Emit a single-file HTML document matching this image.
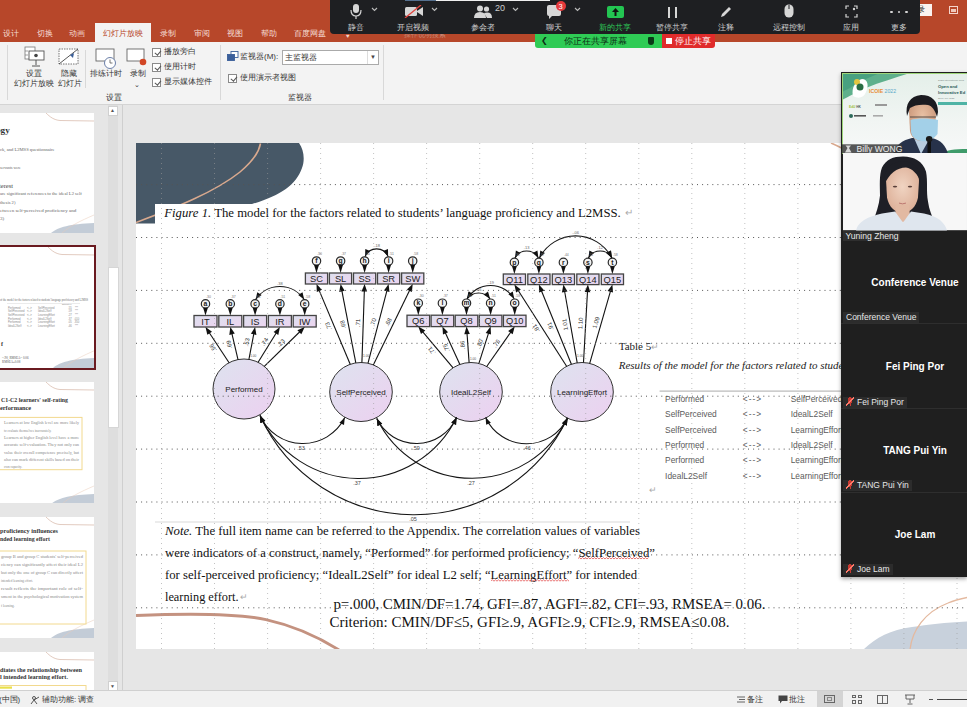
<!DOCTYPE html>
<html><head><meta charset="utf-8">
<style>
*{margin:0;padding:0;box-sizing:border-box}
html,body{width:967px;height:707px;overflow:hidden;background:#e6e6e6;font-family:"Liberation Sans",sans-serif}
.abs{position:absolute}
.t{position:absolute;white-space:nowrap;line-height:1}
#tabs{left:0;top:0;width:967px;height:42px;background:#b7472a}
.tab{position:absolute;top:28px;color:#f6ddd5;font-size:8px}
#ribbon{left:0;top:42px;width:967px;height:63px;background:#f3f3f3;border-bottom:1px solid #d4d4d4}
.rl{position:absolute;font-size:8px;color:#333;white-space:nowrap;line-height:1;margin-top:1px}
.sep{position:absolute;width:1px;background:#d8d8d8}
.cb{position:absolute;width:9px;height:9px;border:1px solid #8a8a8a;background:#fff;margin-top:1px}
.cb:after{content:"";position:absolute;left:2.5px;top:0px;width:2.5px;height:5px;border-right:1px solid #555;border-bottom:1px solid #555;transform:rotate(40deg)}
#pane{left:0;top:105px;width:121px;height:586px;background:#e6e6e6;overflow:hidden}
.thumb{position:absolute;left:0;width:94px;background:#fff;overflow:hidden}
#canvas{left:122px;top:105px;width:845px;height:586px;background:#e6e6e6;border-left:1px solid #cfcfcf}
#status{left:0;top:690px;width:967px;height:17px;background:#f1f1f1;border-top:1px solid #d0d0d0}
#zbar{left:330px;top:0;width:590px;height:34px;background:#1e1f22;border-radius:0 0 4px 4px}
.zl{position:absolute;top:22.5px;color:#d0d0d0;font-size:8.3px;white-space:nowrap;line-height:1;transform:translateX(-50%)}
#panel{left:841px;top:72px;width:126px;height:505px;background:#1f1f1f;box-shadow:0 2px 4px rgba(0,0,0,.35)}
.pname{position:absolute;color:#fff;font-weight:bold;font-size:10px;white-space:nowrap;line-height:1;transform:translateX(-50%)}
.plab{position:absolute;left:2px;height:11px;background:#2c2c2c;color:#e8e8e8;font-size:8.5px;line-height:11px;padding:0 3px 0 3px;white-space:nowrap}
.mic{display:inline-block;width:8px;height:9px;vertical-align:-1px;margin-right:3px;background:linear-gradient(135deg,transparent 42%,#ff7a6a 42%,#ff7a6a 55%,transparent 55%),radial-gradient(ellipse 2.2px 3.5px at 4px 3.5px,#c83a32 98%,transparent 100%),linear-gradient(#c83a32,#c83a32) 3.5px 7px/1px 2px no-repeat}
</style></head><body>

<!-- ribbon tabs -->
<div id="tabs" class="abs">
  <div class="tab" style="left:3px">设计</div>
  <div class="tab" style="left:37px">切换</div>
  <div class="tab" style="left:69px">动画</div>
  <div class="abs" style="left:95px;top:23px;width:56px;height:19px;background:#f3f3f3"></div>
  <div class="tab" style="left:103px;color:#b7472a">幻灯片放映</div>
  <div class="tab" style="left:160px">录制</div>
  <div class="tab" style="left:194px">审阅</div>
  <div class="tab" style="left:227px">视图</div>
  <div class="tab" style="left:261px">帮助</div>
  <div class="tab" style="left:294px">百度网盘</div>
  <div class="t" style="left:346px;top:33px;font-size:6px;color:#f3d6cc">♥</div><div class="t" style="left:404px;top:31px;font-size:7px;color:#c98a77">操作说明搜索</div>
  <div class="abs" style="left:920px;top:4px;width:12px;height:12px;background:#fbf3f0"></div><div class="t" style="left:917px;top:6px;font-size:8px;color:#333">录</div>
  <div class="abs" style="left:949px;top:6px;width:8.5px;height:7.5px;border:1px solid #f5d5cc"></div><div class="abs" style="left:951px;top:9px;width:4.5px;height:2.5px;background:#f0c8bb"></div>
</div>

<!-- ribbon body -->
<div id="ribbon" class="abs">
  <div class="sep" style="left:7px;top:3px;height:55px"></div>
  <!-- setup slideshow icon -->
  <svg class="abs" style="left:22px;top:4px" width="24" height="22" viewBox="0 0 24 22">
    <rect x="3" y="1" width="10" height="12" fill="#fff" stroke="#777" stroke-width="0.8"/>
    <rect x="7" y="5" width="15" height="9" fill="#fff" stroke="#555" stroke-width="0.9"/>
    <circle cx="14" cy="9.5" r="1.8" fill="#444"/>
    <line x1="14" y1="14" x2="14" y2="19" stroke="#555"/>
    <line x1="10" y1="20" x2="18" y2="20" stroke="#555"/>
    <line x1="3" y1="5" x2="6" y2="5" stroke="#777" stroke-width="0.7"/>
    <line x1="3" y1="9" x2="6" y2="9" stroke="#777" stroke-width="0.7"/>
  </svg>
  <div class="rl" style="left:26px;top:27px">设置</div>
  <div class="rl" style="left:14px;top:37px">幻灯片放映</div>
  <svg class="abs" style="left:58px;top:6px" width="22" height="18" viewBox="0 0 22 18">
    <rect x="1" y="1" width="19" height="15" fill="#fff" stroke="#666" stroke-width="0.9" stroke-dasharray="1.5 1"/>
    <line x1="1" y1="16" x2="20" y2="1" stroke="#444" stroke-width="0.9"/>
    <path d="M12 7 L16 5 L15 10 Z" fill="#3b5f9a"/>
  </svg>
  <div class="rl" style="left:61px;top:27px">隐藏</div>
  <div class="rl" style="left:58px;top:37px">幻灯片</div>
  <div class="sep" style="left:85px;top:8px;height:38px"></div>
  <svg class="abs" style="left:95px;top:6px" width="24" height="22" viewBox="0 0 24 22">
    <rect x="1" y="1" width="18" height="12" fill="#fff" stroke="#666" stroke-width="0.9"/>
    <circle cx="15" cy="15" r="5.5" fill="#fff" stroke="#6b7fa8" stroke-width="1"/>
    <line x1="15" y1="15" x2="15" y2="11.5" stroke="#555" stroke-width="0.8"/>
    <line x1="15" y1="15" x2="17.5" y2="15" stroke="#555" stroke-width="0.8"/>
  </svg>
  <div class="rl" style="left:89.5px;top:27px">排练计时</div>
  <svg class="abs" style="left:126px;top:6px" width="22" height="20" viewBox="0 0 22 20">
    <rect x="1" y="1" width="17" height="12" fill="#fff" stroke="#666" stroke-width="0.9"/>
    <circle cx="17" cy="14" r="3.3" fill="#d24726"/>
  </svg>
  <div class="rl" style="left:129.5px;top:27px">录制</div>
  <div class="rl" style="left:134px;top:38px;font-size:7px">⌄</div>
  <div class="cb" style="left:152px;top:5px"></div><div class="rl" style="left:164px;top:5px">播放旁白</div>
  <div class="cb" style="left:152px;top:20px"></div><div class="rl" style="left:164px;top:20px">使用计时</div>
  <div class="cb" style="left:152px;top:35px"></div><div class="rl" style="left:164px;top:35px">显示媒体控件</div>
  <div class="rl" style="left:106px;top:51px">设置</div>
  <div class="sep" style="left:220px;top:3px;height:55px"></div>
  <svg class="abs" style="left:227px;top:9px" width="12" height="11" viewBox="0 0 12 11">
    <rect x="4" y="0.5" width="7" height="6" fill="#fff" stroke="#3b5f9a" stroke-width="0.9"/>
    <rect x="0.5" y="3.5" width="7" height="6" fill="#3b5f9a" stroke="#3b5f9a" stroke-width="0.9"/>
  </svg>
  <div class="rl" style="left:240px;top:10px">监视器(M):</div>
  <div class="abs" style="left:282px;top:8px;width:97px;height:15px;background:#fff;border:1px solid #aaa"></div>
  <div class="rl" style="left:285px;top:11px">主监视器</div>
  <div class="abs" style="left:367px;top:9px;width:1px;height:13px;background:#ddd"></div>
  <div class="rl" style="left:370px;top:11px;font-size:6px;color:#444">▼</div>
  <div class="cb" style="left:228px;top:31px"></div><div class="rl" style="left:240px;top:31px">使用演示者视图</div>
  <div class="rl" style="left:288px;top:51px">监视器</div>
  <div class="sep" style="left:383px;top:3px;height:55px"></div>
</div>

<!-- thumbnails pane -->
<div id="pane" class="abs">
  <!-- thumb 1 -->
  <div class="thumb" style="top:8px;height:120px">
    <svg width="94" height="120" viewBox="0 0 94 120">
      <path d="M46 0 C50 4 54 7 60 7.5 L94 8" fill="none" stroke="#cfa896" stroke-width="0.6"/>
      <path d="M51 120 C58 114 70 111 94 110 L94 120 Z" fill="#c3ccd7"/>
      <path d="M62 120 C70 113 80 108 94 102" fill="none" stroke="#e8cbb8" stroke-width="0.5"/>
      <text x="-4" y="20" font-family="Liberation Serif" font-size="9.2" font-weight="bold" fill="#333">ogy</text>
      <g fill="#666" font-family="Liberation Serif" font-size="4.6">
        <text x="0" y="37.8">ck, and L2MSS questionnaire</text>
        <text x="0" y="55.8" font-size="3.8">servants were</text>
        <text x="-1" y="74.8" font-size="6.5" fill="#444">terest</text>
        <text x="0" y="82">are significant references to the ideal L2 self</text>
        <text x="0" y="90.5">thesis 2)</text>
        <text x="0" y="98.5" font-size="5">etween self-perceived proficiency and</text>
        <text x="0" y="107" font-size="5">3)</text>
      </g>
    </svg>
  </div>
  <!-- thumb 2 selected -->
  <div class="abs" style="left:-3px;top:140px;width:99px;height:125px;border:2px solid #6a1a20;background:#fff;overflow:hidden">
    <svg width="95" height="121" viewBox="-3 0 95 121">
      <path d="M46 0 C50 4 54 7 60 7.5 L94 8" fill="none" stroke="#cfa896" stroke-width="0.6"/>
      <path d="M51 121 C58 115 70 112 94 111 L94 121 Z" fill="#c3ccd7"/>
      <path d="M62 121 C70 114 80 109 94 103" fill="none" stroke="#e8cbb8" stroke-width="0.5"/>
      <g fill="#8a8a8a" font-family="Liberation Sans" font-size="2.7">
        <text x="-2" y="54" font-family="Liberation Serif" font-size="3.6" fill="#666" textLength="88" lengthAdjust="spacingAndGlyphs">of the model for the factors related to students' language proficiency and L2MSS</text>
        <line x1="5" y1="56.5" x2="78" y2="56.5" stroke="#bbb" stroke-width="0.3"/>
        <text x="60" y="57.5" font-size="2">Estimate   P</text>
        <text x="6" y="61.5">Performed</text><text x="25" y="61.5">&lt;--&gt;</text><text x="36" y="61.5">SelfPerceived</text><text x="66" y="61.5">.55</text><text x="73" y="61.5">***</text>
        <text x="6" y="65.2">SelfPerceived</text><text x="25" y="65.2">&lt;--&gt;</text><text x="36" y="65.2">IdealL2Self</text><text x="66" y="65.2">.59</text><text x="73" y="65.2">***</text>
        <text x="6" y="68.8">SelfPerceived</text><text x="25" y="68.8">&lt;--&gt;</text><text x="36" y="68.8">LearningEffort</text><text x="66" y="68.8">.27</text><text x="73" y="68.8">***</text>
        <text x="6" y="72.5">Performed</text><text x="25" y="72.5">&lt;--&gt;</text><text x="36" y="72.5">IdealL2Self</text><text x="66" y="72.5">.37</text><text x="72" y="72.5">.010</text>
        <text x="6" y="76.1">Performed</text><text x="25" y="76.1">&lt;--&gt;</text><text x="36" y="76.1">LearningEffort</text><text x="66" y="76.1">.05</text><text x="72" y="76.1">.350</text>
        <text x="6" y="79.8">IdealL2Self</text><text x="25" y="79.8">&lt;--&gt;</text><text x="36" y="79.8">LearningEffort</text><text x="66" y="79.8">.46</text><text x="73" y="79.8">***</text>
        <text x="0" y="112" font-family="Liberation Serif" font-size="3.2" fill="#555">=.90, RMSEA= 0.06</text>
        <text x="0" y="116" font-family="Liberation Serif" font-size="3.2" fill="#555">RMSEA≤0.08</text>
      </g>
      <text x="-1" y="99" font-family="Liberation Serif" font-size="6" font-weight="bold" fill="#333">f</text>
    </svg>
  </div>
  <!-- thumb 3 -->
  <div class="thumb" style="top:276.6px;height:121.6px">
    <svg width="94" height="122" viewBox="0 0 94 122">
      <path d="M46 0 C50 4 54 7 60 7.5 L94 8" fill="none" stroke="#cfa896" stroke-width="0.6"/>
      <path d="M51 122 C58 116 70 113 94 112 L94 122 Z" fill="#c3ccd7"/>
      <path d="M62 122 C70 115 80 110 94 104" fill="none" stroke="#e8cbb8" stroke-width="0.5"/>
      <text x="1" y="19.5" font-family="Liberation Serif" font-size="6.3" font-weight="bold" fill="#333" textLength="67" lengthAdjust="spacingAndGlyphs">C1-C2 learners' self-rating</text>
      <text x="0" y="27.5" font-family="Liberation Serif" font-size="6.3" font-weight="bold" fill="#333">erformance</text>
      <rect x="-2" y="35.4" width="84" height="52.3" fill="#fff" stroke="#f2d98e" stroke-width="1"/>
      <g fill="#888" font-family="Liberation Serif" font-size="3.3">
        <text x="4" y="41.8" textLength="75" lengthAdjust="spacingAndGlyphs">Learners at low English level are more likely</text>
        <text x="4" y="49.6">to evaluate themselves inaccurately.</text>
        <text x="4" y="57.2" textLength="75" lengthAdjust="spacingAndGlyphs">Learners at higher English level have a more</text>
        <text x="4" y="64.4" textLength="75" lengthAdjust="spacingAndGlyphs">accurate self-evaluation. They not only can</text>
        <text x="4" y="71.6" textLength="75" lengthAdjust="spacingAndGlyphs">value their overall competence precisely, but</text>
        <text x="4" y="79.2" textLength="75" lengthAdjust="spacingAndGlyphs">also can mark different skills based on their</text>
        <text x="4" y="86.4">own capacity.</text>
      </g>
    </svg>
  </div>
  <!-- thumb 4 -->
  <div class="thumb" style="top:412px;height:120.6px">
    <svg width="94" height="121" viewBox="0 0 94 121">
      <path d="M46 0 C50 4 54 7 60 7.5 L94 8" fill="none" stroke="#cfa896" stroke-width="0.6"/>
      <path d="M51 121 C58 115 70 112 94 111 L94 121 Z" fill="#c3ccd7"/>
      <path d="M62 121 C70 114 80 109 94 103" fill="none" stroke="#e8cbb8" stroke-width="0.5"/>
      <text x="0" y="16" font-family="Liberation Serif" font-size="6.3" font-weight="bold" fill="#333" textLength="58" lengthAdjust="spacingAndGlyphs">proficiency influences</text>
      <text x="0" y="23.8" font-family="Liberation Serif" font-size="6.3" font-weight="bold" fill="#333" textLength="50" lengthAdjust="spacingAndGlyphs">nded learning effort</text>
      <rect x="-2" y="34" width="88" height="73" fill="#fff" stroke="#f2d98e" stroke-width="1"/>
      <g fill="#888" font-family="Liberation Serif" font-size="3.3">
        <text x="1" y="41" textLength="82" lengthAdjust="spacingAndGlyphs">group B and group C students' self-perceived</text>
        <text x="1" y="48.9" textLength="82" lengthAdjust="spacingAndGlyphs">ciency can significantly affect their ideal L2</text>
        <text x="1" y="56.9" textLength="82" lengthAdjust="spacingAndGlyphs">but only the one of group C can directly affect</text>
        <text x="1" y="65">intended learning effort.</text>
        <text x="1" y="72.6" textLength="82" lengthAdjust="spacingAndGlyphs">result reflects the important role of self-</text>
        <text x="1" y="80.7" textLength="82" lengthAdjust="spacingAndGlyphs">sment in the psychological motivation system</text>
        <text x="1" y="89.8">f learning.</text>
      </g>
    </svg>
  </div>
  <!-- thumb 5 -->
  <div class="thumb" style="top:547px;height:60px">
    <svg width="94" height="60" viewBox="0 0 94 60">
      <path d="M46 0 C50 4 54 7 60 7.5 L94 8" fill="none" stroke="#cfa896" stroke-width="0.6"/>
      <text x="0" y="19.6" font-family="Liberation Serif" font-size="6.3" font-weight="bold" fill="#333" textLength="82" lengthAdjust="spacingAndGlyphs">diates the relationship between</text>
      <text x="0" y="27.2" font-family="Liberation Serif" font-size="6.3" font-weight="bold" fill="#333" textLength="68" lengthAdjust="spacingAndGlyphs">l intended learning effort.</text>
      <rect x="-2" y="33.5" width="88" height="30" fill="#fff" stroke="#f2d98e" stroke-width="1"/>
      <rect x="0" y="34.5" width="12" height="2.2" fill="#e9e04a"/>
    </svg>
  </div>
  <!-- scrollbar -->
  <div class="abs" style="left:108px;top:0;width:10px;height:586px;background:#dedede"></div>
  <div class="abs" style="left:108px;top:1px;width:10px;height:10px;background:#fff;border:1px solid #d0d0d0"></div>
  <div class="t" style="left:110px;top:3px;font-size:5px;color:#555">▲</div>
  <div class="abs" style="left:108px;top:162px;width:11px;height:161px;background:#fff;border:1px solid #d6d6d6"></div>
  <div class="abs" style="left:108px;top:576px;width:10px;height:10px;background:#fff;border:1px solid #d0d0d0"></div>
  <div class="t" style="left:110px;top:579px;font-size:5px;color:#555">▼</div>
</div>

<!-- slide canvas -->
<div id="canvas" class="abs"></div>
<svg style="position:absolute;left:136px;top:143px" width="831" height="506" viewBox="136 143 831 506"><defs>
<linearGradient id="gb" x1="0" y1="0" x2="1" y2="1"><stop offset="0" stop-color="#dde0ee"/><stop offset="1" stop-color="#ecd4f0"/></linearGradient>
<linearGradient id="ge" x1="0.1" y1="0.1" x2="0.9" y2="0.9"><stop offset="0" stop-color="#dfe1ef"/><stop offset="1" stop-color="#ebd2f0"/></linearGradient>
</defs><rect x="136" y="143" width="840" height="506" fill="#fff"/><path d="M136 143 L299 143 C304 150 305 160 302 168 C296 185 280 196 252 204 L155 204 L155 223.5 L136 223.5 Z" fill="#475867"/><path d="M136 222.5 C175 208 215 192 240 172 C252 162 259 152 260.5 143.5" fill="none" stroke="#d9a98e" stroke-width="1.6"/><rect x="155" y="204" width="475" height="318" fill="#fff"/><line x1="155" y1="522" x2="630" y2="522" stroke="#cfcfcf" stroke-width="0.8"/><path d="M831 143 C838 146 846 150 860 158" fill="none" stroke="#d9a98e" stroke-width="1.6"/><path d="M136 615.5 C170 614 230 612 266 619.6 C295 626 320 638 339 650" fill="none" stroke="#c49280" stroke-width="3"/><path d="M863 650 C875 638 890 630 912 627 C930 624 950 622 976 621 L976 650 Z" fill="#c8d1dc"/><path d="M910 650 C912 630 925 612 948 603 C955 600 962 598 976 596" fill="none" stroke="#e4b99f" stroke-width="1.3"/><g font-family="Liberation Sans, sans-serif"><rect x="194.0" y="315.5" width="23.0" height="11.5" fill="url(#gb)" stroke="#444" stroke-width="1.3"/><circle cx="205.5" cy="303.9" r="4.2" fill="#f2f2f2" stroke="#2a2a2a" stroke-width="1.2"/><rect x="218.8" y="315.5" width="23.0" height="11.5" fill="url(#gb)" stroke="#444" stroke-width="1.3"/><circle cx="230.3" cy="303.9" r="4.2" fill="#f2f2f2" stroke="#2a2a2a" stroke-width="1.2"/><rect x="243.6" y="315.5" width="23.0" height="11.5" fill="url(#gb)" stroke="#444" stroke-width="1.3"/><circle cx="255.1" cy="303.9" r="4.2" fill="#f2f2f2" stroke="#2a2a2a" stroke-width="1.2"/><rect x="268.4" y="315.5" width="23.0" height="11.5" fill="url(#gb)" stroke="#444" stroke-width="1.3"/><circle cx="279.9" cy="303.9" r="4.2" fill="#f2f2f2" stroke="#2a2a2a" stroke-width="1.2"/><rect x="293.2" y="315.5" width="23.0" height="11.5" fill="url(#gb)" stroke="#444" stroke-width="1.3"/><circle cx="304.7" cy="303.9" r="4.2" fill="#f2f2f2" stroke="#2a2a2a" stroke-width="1.2"/><rect x="305.4" y="273.0" width="22.2" height="11.0" fill="url(#gb)" stroke="#444" stroke-width="1.3"/><circle cx="316.5" cy="261.0" r="4.2" fill="#f2f2f2" stroke="#2a2a2a" stroke-width="1.2"/><rect x="329.4" y="273.0" width="22.2" height="11.0" fill="url(#gb)" stroke="#444" stroke-width="1.3"/><circle cx="340.6" cy="261.0" r="4.2" fill="#f2f2f2" stroke="#2a2a2a" stroke-width="1.2"/><rect x="353.5" y="273.0" width="22.2" height="11.0" fill="url(#gb)" stroke="#444" stroke-width="1.3"/><circle cx="364.6" cy="261.0" r="4.2" fill="#f2f2f2" stroke="#2a2a2a" stroke-width="1.2"/><rect x="377.5" y="273.0" width="22.2" height="11.0" fill="url(#gb)" stroke="#444" stroke-width="1.3"/><circle cx="388.6" cy="261.0" r="4.2" fill="#f2f2f2" stroke="#2a2a2a" stroke-width="1.2"/><rect x="401.6" y="273.0" width="22.2" height="11.0" fill="url(#gb)" stroke="#444" stroke-width="1.3"/><circle cx="412.7" cy="261.0" r="4.2" fill="#f2f2f2" stroke="#2a2a2a" stroke-width="1.2"/><rect x="407.0" y="315.2" width="22.6" height="11.4" fill="url(#gb)" stroke="#444" stroke-width="1.3"/><circle cx="418.3" cy="303.2" r="4.2" fill="#f2f2f2" stroke="#2a2a2a" stroke-width="1.2"/><rect x="431.1" y="315.2" width="22.6" height="11.4" fill="url(#gb)" stroke="#444" stroke-width="1.3"/><circle cx="442.4" cy="303.2" r="4.2" fill="#f2f2f2" stroke="#2a2a2a" stroke-width="1.2"/><rect x="455.2" y="315.2" width="22.6" height="11.4" fill="url(#gb)" stroke="#444" stroke-width="1.3"/><circle cx="466.5" cy="303.2" r="4.2" fill="#f2f2f2" stroke="#2a2a2a" stroke-width="1.2"/><rect x="479.3" y="315.2" width="22.6" height="11.4" fill="url(#gb)" stroke="#444" stroke-width="1.3"/><circle cx="490.6" cy="303.2" r="4.2" fill="#f2f2f2" stroke="#2a2a2a" stroke-width="1.2"/><rect x="503.4" y="315.2" width="22.6" height="11.4" fill="url(#gb)" stroke="#444" stroke-width="1.3"/><circle cx="514.7" cy="303.2" r="4.2" fill="#f2f2f2" stroke="#2a2a2a" stroke-width="1.2"/><rect x="503.3" y="274.0" width="22.2" height="10.6" fill="url(#gb)" stroke="#444" stroke-width="1.3"/><circle cx="514.4" cy="262.4" r="4.2" fill="#f2f2f2" stroke="#2a2a2a" stroke-width="1.2"/><rect x="527.8" y="274.0" width="22.2" height="10.6" fill="url(#gb)" stroke="#444" stroke-width="1.3"/><circle cx="538.9" cy="262.4" r="4.2" fill="#f2f2f2" stroke="#2a2a2a" stroke-width="1.2"/><rect x="552.3" y="274.0" width="22.2" height="10.6" fill="url(#gb)" stroke="#444" stroke-width="1.3"/><circle cx="563.4" cy="262.4" r="4.2" fill="#f2f2f2" stroke="#2a2a2a" stroke-width="1.2"/><rect x="576.8" y="274.0" width="22.2" height="10.6" fill="url(#gb)" stroke="#444" stroke-width="1.3"/><circle cx="587.9" cy="262.4" r="4.2" fill="#f2f2f2" stroke="#2a2a2a" stroke-width="1.2"/><rect x="601.3" y="274.0" width="22.2" height="10.6" fill="url(#gb)" stroke="#444" stroke-width="1.3"/><circle cx="612.4" cy="262.4" r="4.2" fill="#f2f2f2" stroke="#2a2a2a" stroke-width="1.2"/><ellipse cx="244" cy="389" rx="31" ry="30" fill="url(#ge)" stroke="#333" stroke-width="1"/><ellipse cx="361" cy="392" rx="31.3" ry="29.5" fill="url(#ge)" stroke="#333" stroke-width="1"/><ellipse cx="471" cy="392" rx="31.3" ry="29.5" fill="url(#ge)" stroke="#333" stroke-width="1"/><ellipse cx="582" cy="392" rx="31.3" ry="29.5" fill="url(#ge)" stroke="#333" stroke-width="1"/><path d="M205.5 315.5 L203.1 307.8 L207.9 307.8 Z" fill="#111"/><line x1="229.1" y1="362.7" x2="208.3" y2="331.2" stroke="#111" stroke-width="1.1"/><path d="M205.5 327.0 L212.0 331.7 L207.3 334.8 Z" fill="#111"/><path d="M230.3 315.5 L227.9 307.8 L232.7 307.8 Z" fill="#111"/><line x1="238.0" y1="359.6" x2="231.5" y2="331.9" stroke="#111" stroke-width="1.1"/><path d="M230.3 327.0 L234.8 333.6 L229.3 334.9 Z" fill="#111"/><path d="M255.1 315.5 L252.7 307.8 L257.5 307.8 Z" fill="#111"/><line x1="248.9" y1="359.4" x2="254.2" y2="331.9" stroke="#111" stroke-width="1.1"/><path d="M255.1 327.0 L256.4 334.9 L250.9 333.8 Z" fill="#111"/><path d="M279.9 315.5 L277.5 307.8 L282.3 307.8 Z" fill="#111"/><line x1="258.1" y1="362.3" x2="277.3" y2="331.3" stroke="#111" stroke-width="1.1"/><path d="M279.9 327.0 L278.3 334.9 L273.6 331.9 Z" fill="#111"/><path d="M304.7 315.5 L302.3 307.8 L307.1 307.8 Z" fill="#111"/><line x1="264.3" y1="366.3" x2="301.1" y2="330.5" stroke="#111" stroke-width="1.1"/><path d="M304.7 327.0 L301.3 334.2 L297.4 330.2 Z" fill="#111"/><path d="M316.5 273.0 L314.1 264.9 L318.9 264.9 Z" fill="#111"/><line x1="350.2" y1="364.3" x2="318.4" y2="288.6" stroke="#111" stroke-width="1.1"/><path d="M316.5 284.0 L322.0 289.8 L316.8 292.0 Z" fill="#111"/><path d="M340.6 273.0 L338.2 264.9 L342.9 264.9 Z" fill="#111"/><line x1="355.8" y1="362.9" x2="341.5" y2="288.9" stroke="#111" stroke-width="1.1"/><path d="M340.6 284.0 L344.7 290.8 L339.2 291.9 Z" fill="#111"/><path d="M364.6 273.0 L362.2 264.9 L367.0 264.9 Z" fill="#111"/><line x1="361.9" y1="362.5" x2="364.4" y2="289.0" stroke="#111" stroke-width="1.1"/><path d="M364.6 284.0 L367.1 291.6 L361.5 291.4 Z" fill="#111"/><path d="M388.6 273.0 L386.2 264.9 L391.0 264.9 Z" fill="#111"/><line x1="368.0" y1="363.2" x2="387.4" y2="288.8" stroke="#111" stroke-width="1.1"/><path d="M388.6 284.0 L389.5 292.0 L384.0 290.6 Z" fill="#111"/><path d="M412.7 273.0 L410.3 264.9 L415.1 264.9 Z" fill="#111"/><line x1="373.3" y1="364.9" x2="410.5" y2="288.5" stroke="#111" stroke-width="1.1"/><path d="M412.7 284.0 L411.9 292.0 L406.9 289.5 Z" fill="#111"/><path d="M418.3 315.2 L415.9 307.1 L420.7 307.1 Z" fill="#111"/><line x1="453.1" y1="367.8" x2="421.5" y2="330.4" stroke="#111" stroke-width="1.1"/><path d="M418.3 326.6 L425.3 330.5 L421.0 334.1 Z" fill="#111"/><path d="M442.4 315.2 L440.0 307.1 L444.8 307.1 Z" fill="#111"/><line x1="459.9" y1="364.4" x2="444.5" y2="331.1" stroke="#111" stroke-width="1.1"/><path d="M442.4 326.6 L448.1 332.2 L443.0 334.6 Z" fill="#111"/><path d="M466.5 315.2 L464.1 307.1 L468.9 307.1 Z" fill="#111"/><line x1="469.1" y1="362.6" x2="466.9" y2="331.6" stroke="#111" stroke-width="1.1"/><path d="M466.5 326.6 L469.8 333.9 L464.3 334.3 Z" fill="#111"/><path d="M490.6 315.2 L488.2 307.1 L493.0 307.1 Z" fill="#111"/><line x1="478.9" y1="363.4" x2="489.1" y2="331.4" stroke="#111" stroke-width="1.1"/><path d="M490.6 326.6 L491.0 334.6 L485.7 332.9 Z" fill="#111"/><path d="M514.7 315.2 L512.3 307.1 L517.1 307.1 Z" fill="#111"/><line x1="486.7" y1="366.5" x2="511.8" y2="330.7" stroke="#111" stroke-width="1.1"/><path d="M514.7 326.6 L512.7 334.3 L508.1 331.1 Z" fill="#111"/><path d="M514.4 274.0 L512.0 266.3 L516.8 266.3 Z" fill="#111"/><line x1="566.6" y1="366.3" x2="517.1" y2="288.8" stroke="#111" stroke-width="1.1"/><path d="M514.4 284.6 L520.8 289.4 L516.1 292.4 Z" fill="#111"/><path d="M538.9 274.0 L536.5 266.3 L541.3 266.3 Z" fill="#111"/><line x1="571.4" y1="364.2" x2="540.8" y2="289.2" stroke="#111" stroke-width="1.1"/><path d="M538.9 284.6 L544.3 290.5 L539.1 292.6 Z" fill="#111"/><path d="M563.4 274.0 L561.0 266.3 L565.8 266.3 Z" fill="#111"/><line x1="577.2" y1="362.9" x2="564.3" y2="289.5" stroke="#111" stroke-width="1.1"/><path d="M563.4 284.6 L567.5 291.5 L561.9 292.5 Z" fill="#111"/><path d="M587.9 274.0 L585.5 266.3 L590.3 266.3 Z" fill="#111"/><line x1="583.5" y1="362.5" x2="587.6" y2="289.6" stroke="#111" stroke-width="1.1"/><path d="M587.9 284.6 L590.3 292.2 L584.7 291.9 Z" fill="#111"/><path d="M612.4 274.0 L610.0 266.3 L614.8 266.3 Z" fill="#111"/><line x1="589.7" y1="363.4" x2="611.0" y2="289.4" stroke="#111" stroke-width="1.1"/><path d="M612.4 284.6 L613.0 292.6 L607.6 291.0 Z" fill="#111"/><path d="M260.0 415.5 A46.8 46.8 0 0 0 344.8 417.6" fill="none" stroke="#151515" stroke-width="1.1"/><path d="M260.0 415.5 L265.2 420.9 L260.4 423.0 Z" fill="#111"/><path d="M344.8 417.6 L344.0 425.0 L339.4 422.7 Z" fill="#111"/><path d="M260.0 415.5 A108.9 108.9 0 0 0 456.6 417.4" fill="none" stroke="#151515" stroke-width="1.1"/><path d="M260.0 415.5 L265.3 420.7 L260.6 422.9 Z" fill="#111"/><path d="M456.6 417.4 L455.9 424.8 L451.2 422.5 Z" fill="#111"/><path d="M260.0 415.5 A169.6 169.6 0 0 0 567.5 418.0" fill="none" stroke="#151515" stroke-width="1.1"/><path d="M260.0 415.5 L265.3 420.8 L260.5 422.9 Z" fill="#111"/><path d="M567.5 418.0 L566.8 425.4 L562.1 423.2 Z" fill="#111"/><path d="M376.8 418.6 A44.0 44.0 0 0 0 456.6 417.4" fill="none" stroke="#151515" stroke-width="1.1"/><path d="M376.8 418.6 L382.2 423.8 L377.5 426.0 Z" fill="#111"/><path d="M456.6 417.4 L456.1 424.9 L451.4 422.7 Z" fill="#111"/><path d="M376.8 418.6 A105.8 105.8 0 0 0 567.5 418.0" fill="none" stroke="#151515" stroke-width="1.1"/><path d="M376.8 418.6 L382.2 423.8 L377.5 426.0 Z" fill="#111"/><path d="M567.5 418.0 L566.8 425.4 L562.1 423.2 Z" fill="#111"/><path d="M485.6 417.4 A45.2 45.2 0 0 0 567.5 418.0" fill="none" stroke="#151515" stroke-width="1.1"/><path d="M485.6 417.4 L490.9 422.7 L486.2 424.8 Z" fill="#111"/><path d="M567.5 418.0 L566.8 425.4 L562.1 423.2 Z" fill="#111"/><path d="M255.6 299.5 A29.2 29.2 0 0 1 304.2 299.5" fill="none" stroke="#151515" stroke-width="1.1"/><path d="M255.6 299.5 L257.3 292.2 L261.6 295.1 Z" fill="#111"/><path d="M304.2 299.5 L298.2 295.1 L302.5 292.2 Z" fill="#111"/><text x="279.9" y="284.5" font-size="4" text-anchor="middle" fill="#666">.38</text><path d="M365.1 256.6 A12.4 12.4 0 0 1 388.1 256.6" fill="none" stroke="#151515" stroke-width="1.1"/><path d="M365.1 256.6 L365.3 249.1 L370.1 251.1 Z" fill="#111"/><path d="M388.1 256.6 L383.1 251.1 L388.0 249.1 Z" fill="#111"/><text x="376.6" y="246.8" font-size="4" text-anchor="middle" fill="#666">-.18</text><path d="M467.0 298.8 A14.4 14.4 0 0 1 490.1 298.8" fill="none" stroke="#151515" stroke-width="1.1"/><path d="M467.0 298.8 L469.1 291.6 L473.3 294.7 Z" fill="#111"/><path d="M490.1 298.8 L483.8 294.7 L488.0 291.6 Z" fill="#111"/><text x="478.6" y="291.0" font-size="4" text-anchor="middle" fill="#666">.56</text><path d="M467.0 298.8 A27.6 27.6 0 0 1 514.2 298.8" fill="none" stroke="#151515" stroke-width="1.1"/><path d="M467.0 298.8 L468.4 291.5 L472.8 294.2 Z" fill="#111"/><path d="M514.2 298.8 L508.4 294.2 L512.8 291.5 Z" fill="#111"/><text x="490.6" y="283.5" font-size="4" text-anchor="middle" fill="#666">-.19</text><path d="M514.9 258.0 A13.4 13.4 0 0 1 538.4 258.0" fill="none" stroke="#151515" stroke-width="1.1"/><path d="M514.9 258.0 L515.9 250.6 L520.5 253.1 Z" fill="#111"/><path d="M538.4 258.0 L532.8 253.1 L537.4 250.6 Z" fill="#111"/><text x="526.6" y="249.0" font-size="4" text-anchor="middle" fill="#666">.13</text><path d="M588.4 258.0 A13.4 13.4 0 0 1 611.9 258.0" fill="none" stroke="#151515" stroke-width="1.1"/><path d="M588.4 258.0 L589.4 250.6 L594.0 253.1 Z" fill="#111"/><path d="M611.9 258.0 L606.3 253.1 L610.9 250.6 Z" fill="#111"/><text x="600.1" y="249.0" font-size="4" text-anchor="middle" fill="#666">.12</text><path d="M539.4 258.0 A40.8 40.8 0 0 1 611.9 258.0" fill="none" stroke="#151515" stroke-width="1.1"/><path d="M539.4 258.0 L540.3 250.6 L544.9 253.0 Z" fill="#111"/><path d="M611.9 258.0 L606.4 253.0 L611.0 250.6 Z" fill="#111"/><text x="575.6" y="233.9" font-size="4" text-anchor="middle" fill="#666">-.06</text><text x="205.5" y="324.6" font-size="9.3" text-anchor="middle" fill="#222">IT</text><text x="205.5" y="306.1" font-size="6.8" font-weight="bold" text-anchor="middle" fill="#222">a</text><text x="208.5" y="297.9" font-size="3.5" text-anchor="middle" fill="#777">.30</text><text x="214.6" y="346.6" font-size="6" text-anchor="middle" fill="#333" transform="rotate(-123.4 214.6 346.6)">.56</text><text x="230.3" y="324.6" font-size="9.3" text-anchor="middle" fill="#222">IL</text><text x="230.3" y="306.1" font-size="6.8" font-weight="bold" text-anchor="middle" fill="#222">b</text><text x="233.3" y="297.9" font-size="3.5" text-anchor="middle" fill="#777">.37</text><text x="231.1" y="344.0" font-size="6" text-anchor="middle" fill="#333" transform="rotate(-103.4 231.1 344.0)">.69</text><text x="255.1" y="324.6" font-size="9.3" text-anchor="middle" fill="#222">IS</text><text x="255.1" y="306.1" font-size="6.8" font-weight="bold" text-anchor="middle" fill="#222">c</text><text x="258.1" y="297.9" font-size="3.5" text-anchor="middle" fill="#777">.44</text><text x="248.8" y="342.6" font-size="6" text-anchor="middle" fill="#333" transform="rotate(-79.1 248.8 342.6)">.53</text><text x="253.3" y="357.1" font-size="3.2" text-anchor="middle" fill="#555">1.00</text><text x="279.9" y="324.6" font-size="9.3" text-anchor="middle" fill="#222">IR</text><text x="279.9" y="306.1" font-size="6.8" font-weight="bold" text-anchor="middle" fill="#222">d</text><text x="282.9" y="297.9" font-size="3.5" text-anchor="middle" fill="#777">.51</text><text x="266.3" y="343.0" font-size="6" text-anchor="middle" fill="#333" transform="rotate(-58.4 266.3 343.0)">.74</text><text x="304.7" y="324.6" font-size="9.3" text-anchor="middle" fill="#222">IW</text><text x="304.7" y="306.1" font-size="6.8" font-weight="bold" text-anchor="middle" fill="#222">e</text><text x="307.7" y="297.9" font-size="3.5" text-anchor="middle" fill="#777">.58</text><text x="282.3" y="344.4" font-size="6" text-anchor="middle" fill="#333" transform="rotate(-44.2 282.3 344.4)">.23</text><text x="316.5" y="281.9" font-size="9.3" text-anchor="middle" fill="#222">SC</text><text x="316.5" y="263.2" font-size="6.8" font-weight="bold" text-anchor="middle" fill="#222">f</text><text x="319.5" y="255.0" font-size="3.5" text-anchor="middle" fill="#777">.30</text><text x="330.4" y="325.4" font-size="6" text-anchor="middle" fill="#333" transform="rotate(-112.7 330.4 325.4)">.73</text><text x="340.6" y="281.9" font-size="9.3" text-anchor="middle" fill="#222">SL</text><text x="340.6" y="263.2" font-size="6.8" font-weight="bold" text-anchor="middle" fill="#222">g</text><text x="343.6" y="255.0" font-size="3.5" text-anchor="middle" fill="#777">.37</text><text x="345.0" y="324.1" font-size="6" text-anchor="middle" fill="#333" transform="rotate(-100.9 345.0 324.1)">.68</text><text x="364.6" y="281.9" font-size="9.3" text-anchor="middle" fill="#222">SS</text><text x="364.6" y="263.2" font-size="6.8" font-weight="bold" text-anchor="middle" fill="#222">h</text><text x="367.6" y="255.0" font-size="3.5" text-anchor="middle" fill="#777">.44</text><text x="360.1" y="323.1" font-size="6" text-anchor="middle" fill="#333" transform="rotate(-88.1 360.1 323.1)">.71</text><text x="366.1" y="357.0" font-size="3.2" text-anchor="middle" fill="#555">1.00</text><text x="388.6" y="281.9" font-size="9.3" text-anchor="middle" fill="#222">SR</text><text x="388.6" y="263.2" font-size="6.8" font-weight="bold" text-anchor="middle" fill="#222">i</text><text x="391.6" y="255.0" font-size="3.5" text-anchor="middle" fill="#777">.51</text><text x="375.2" y="322.8" font-size="6" text-anchor="middle" fill="#333" transform="rotate(-75.4 375.2 322.8)">.70</text><text x="412.7" y="281.9" font-size="9.3" text-anchor="middle" fill="#222">SW</text><text x="412.7" y="263.2" font-size="6.8" font-weight="bold" text-anchor="middle" fill="#222">j</text><text x="415.7" y="255.0" font-size="3.5" text-anchor="middle" fill="#777">.58</text><text x="390.1" y="323.0" font-size="6" text-anchor="middle" fill="#333" transform="rotate(-64.1 390.1 323.0)">.68</text><text x="418.3" y="324.3" font-size="9.3" text-anchor="middle" fill="#222">Q6</text><text x="418.3" y="305.4" font-size="6.8" font-weight="bold" text-anchor="middle" fill="#222">k</text><text x="421.3" y="297.2" font-size="3.5" text-anchor="middle" fill="#777">.30</text><text x="433.2" y="349.3" font-size="6" text-anchor="middle" fill="#333" transform="rotate(-130.2 433.2 349.3)">.71</text><text x="442.4" y="324.3" font-size="9.3" text-anchor="middle" fill="#222">Q7</text><text x="442.4" y="305.4" font-size="6.8" font-weight="bold" text-anchor="middle" fill="#222">l</text><text x="445.4" y="297.2" font-size="3.5" text-anchor="middle" fill="#777">.37</text><text x="448.2" y="346.9" font-size="6" text-anchor="middle" fill="#333" transform="rotate(-114.8 448.2 346.9)">.75</text><text x="466.5" y="324.3" font-size="9.3" text-anchor="middle" fill="#222">Q8</text><text x="466.5" y="305.4" font-size="6.8" font-weight="bold" text-anchor="middle" fill="#222">m</text><text x="469.5" y="297.2" font-size="3.5" text-anchor="middle" fill="#777">.44</text><text x="464.6" y="344.8" font-size="6" text-anchor="middle" fill="#333" transform="rotate(-94.2 464.6 344.8)">.86</text><text x="473.0" y="360.0" font-size="3.2" text-anchor="middle" fill="#555">1.00</text><text x="490.6" y="324.3" font-size="9.3" text-anchor="middle" fill="#222">Q9</text><text x="490.6" y="305.4" font-size="6.8" font-weight="bold" text-anchor="middle" fill="#222">n</text><text x="493.6" y="297.2" font-size="3.5" text-anchor="middle" fill="#777">.51</text><text x="481.7" y="344.1" font-size="6" text-anchor="middle" fill="#333" transform="rotate(-72.3 481.7 344.1)">.80</text><text x="514.7" y="324.3" font-size="9.3" text-anchor="middle" fill="#222">Q10</text><text x="514.7" y="305.4" font-size="6.8" font-weight="bold" text-anchor="middle" fill="#222">o</text><text x="517.7" y="297.2" font-size="3.5" text-anchor="middle" fill="#777">.58</text><text x="498.1" y="344.7" font-size="6" text-anchor="middle" fill="#333" transform="rotate(-54.9 498.1 344.7)">.76</text><text x="514.4" y="282.7" font-size="9.3" text-anchor="middle" fill="#222">Q11</text><text x="514.4" y="264.6" font-size="6.8" font-weight="bold" text-anchor="middle" fill="#222">p</text><text x="517.4" y="256.4" font-size="3.5" text-anchor="middle" fill="#777">.30</text><text x="537.8" y="327.2" font-size="6" text-anchor="middle" fill="#333" transform="rotate(-122.6 537.8 327.2)">.81</text><text x="538.9" y="282.7" font-size="9.3" text-anchor="middle" fill="#222">Q12</text><text x="538.9" y="264.6" font-size="6.8" font-weight="bold" text-anchor="middle" fill="#222">q</text><text x="541.9" y="256.4" font-size="3.5" text-anchor="middle" fill="#777">.37</text><text x="552.2" y="325.6" font-size="6" text-anchor="middle" fill="#333" transform="rotate(-112.2 552.2 325.6)">.91</text><text x="563.4" y="282.7" font-size="9.3" text-anchor="middle" fill="#222">Q13</text><text x="563.4" y="264.6" font-size="6.8" font-weight="bold" text-anchor="middle" fill="#222">r</text><text x="566.4" y="256.4" font-size="3.5" text-anchor="middle" fill="#777">.44</text><text x="567.1" y="324.3" font-size="6" text-anchor="middle" fill="#333" transform="rotate(-100.0 567.1 324.3)">1.01</text><text x="580.2" y="357.4" font-size="3.2" text-anchor="middle" fill="#555">1.00</text><text x="587.9" y="282.7" font-size="9.3" text-anchor="middle" fill="#222">Q14</text><text x="587.9" y="264.6" font-size="6.8" font-weight="bold" text-anchor="middle" fill="#222">s</text><text x="590.9" y="256.4" font-size="3.5" text-anchor="middle" fill="#777">.51</text><text x="582.5" y="323.4" font-size="6" text-anchor="middle" fill="#333" transform="rotate(-86.8 582.5 323.4)">1.10</text><text x="612.4" y="282.7" font-size="9.3" text-anchor="middle" fill="#222">Q15</text><text x="612.4" y="264.6" font-size="6.8" font-weight="bold" text-anchor="middle" fill="#222">t</text><text x="615.4" y="256.4" font-size="3.5" text-anchor="middle" fill="#777">.58</text><text x="598.0" y="323.1" font-size="6" text-anchor="middle" fill="#333" transform="rotate(-73.9 598.0 323.1)">1.09</text><text x="244" y="392.3" font-size="8" text-anchor="middle" fill="#222">Performed</text><text x="361" y="395.3" font-size="8" text-anchor="middle" fill="#222">SelfPerceived</text><text x="471" y="395.3" font-size="8" text-anchor="middle" fill="#222">IdealL2Self</text><text x="582" y="395.3" font-size="8" text-anchor="middle" fill="#222">LearningEffort</text><text x="301" y="450" font-size="5.5" text-anchor="middle" fill="#444">.53</text><text x="357" y="485.2" font-size="5.5" text-anchor="middle" fill="#444">.37</text><text x="413" y="521" font-size="5.5" text-anchor="middle" fill="#444">.05</text><text x="416" y="450" font-size="5.5" text-anchor="middle" fill="#444">.59</text><text x="471" y="485.2" font-size="5.5" text-anchor="middle" fill="#444">.27</text><text x="527" y="450" font-size="5.5" text-anchor="middle" fill="#444">.46</text></g><text x="164.3" y="216.7" font-family="Liberation Serif, serif" font-size="13" fill="#111" textLength="456.5" lengthAdjust="spacingAndGlyphs"><tspan font-style="italic">Figure 1.</tspan> The model for the factors related to students’ language proficiency and L2MSS.</text><text x="625" y="216" font-family="Liberation Sans, sans-serif" font-size="10" fill="#aaa">↵</text><text x="618.7" y="350.4" font-family="Liberation Serif, serif" font-size="11" fill="#222">Table 5<tspan fill="#aaa" font-size="9">↵</tspan></text><text x="618.7" y="369" font-family="Liberation Serif, serif" font-size="11" font-style="italic" fill="#222">Results of the model for the factors related to students’ language</text><line x1="659.6" y1="391.1" x2="976" y2="391.1" stroke="#a0a0a0" stroke-width="0.9"/><text x="665.1" y="402.0" font-family="Liberation Sans, sans-serif" font-size="8.4" fill="#5a5a5a">Performed</text><text x="742.8" y="402.0" font-family="Liberation Sans, sans-serif" font-size="8.4" fill="#5a5a5a" letter-spacing="1">&lt;--&gt;</text><text x="790.7" y="402.0" font-family="Liberation Sans, sans-serif" font-size="8.4" fill="#5a5a5a">SelfPerceived</text><text x="665.1" y="417.3" font-family="Liberation Sans, sans-serif" font-size="8.4" fill="#5a5a5a">SelfPerceived</text><text x="742.8" y="417.3" font-family="Liberation Sans, sans-serif" font-size="8.4" fill="#5a5a5a" letter-spacing="1">&lt;--&gt;</text><text x="790.7" y="417.3" font-family="Liberation Sans, sans-serif" font-size="8.4" fill="#5a5a5a">IdealL2Self</text><text x="665.1" y="432.6" font-family="Liberation Sans, sans-serif" font-size="8.4" fill="#5a5a5a">SelfPerceived</text><text x="742.8" y="432.6" font-family="Liberation Sans, sans-serif" font-size="8.4" fill="#5a5a5a" letter-spacing="1">&lt;--&gt;</text><text x="790.7" y="432.6" font-family="Liberation Sans, sans-serif" font-size="8.4" fill="#5a5a5a">LearningEffort</text><text x="665.1" y="447.9" font-family="Liberation Sans, sans-serif" font-size="8.4" fill="#5a5a5a">Performed</text><text x="742.8" y="447.9" font-family="Liberation Sans, sans-serif" font-size="8.4" fill="#5a5a5a" letter-spacing="1">&lt;--&gt;</text><text x="790.7" y="447.9" font-family="Liberation Sans, sans-serif" font-size="8.4" fill="#5a5a5a">IdealL2Self</text><text x="665.1" y="463.2" font-family="Liberation Sans, sans-serif" font-size="8.4" fill="#5a5a5a">Performed</text><text x="742.8" y="463.2" font-family="Liberation Sans, sans-serif" font-size="8.4" fill="#5a5a5a" letter-spacing="1">&lt;--&gt;</text><text x="790.7" y="463.2" font-family="Liberation Sans, sans-serif" font-size="8.4" fill="#5a5a5a">LearningEffort</text><text x="665.1" y="478.5" font-family="Liberation Sans, sans-serif" font-size="8.4" fill="#5a5a5a">IdealL2Self</text><text x="742.8" y="478.5" font-family="Liberation Sans, sans-serif" font-size="8.4" fill="#5a5a5a" letter-spacing="1">&lt;--&gt;</text><text x="790.7" y="478.5" font-family="Liberation Sans, sans-serif" font-size="8.4" fill="#5a5a5a">LearningEffort</text><text x="649" y="493" font-family="Liberation Sans, sans-serif" font-size="9" fill="#aaa">↵</text><text x="165" y="534.7" font-family="Liberation Serif, serif" font-size="11.6" fill="#111" textLength="475" lengthAdjust="spacingAndGlyphs"><tspan font-style="italic">Note.</tspan> The full item name can be referred to the Appendix. The correlation values of variables</text><text x="165" y="557.4" font-family="Liberation Serif, serif" font-size="11.6" fill="#111" textLength="490" lengthAdjust="spacingAndGlyphs">were indicators of a construct, namely, “Performed” for performed proficiency; “SelfPerceived”</text><text x="165" y="579.1" font-family="Liberation Serif, serif" font-size="11.6" fill="#111" textLength="472" lengthAdjust="spacingAndGlyphs">for self-perceived proficiency; “IdealL2Self” for ideal L2 self; “LearningEffort” for intended</text><text x="165" y="600.8" font-family="Liberation Serif, serif" font-size="11.6" fill="#111" textLength="73.5" lengthAdjust="spacingAndGlyphs">learning effort.</text><text x="240" y="600" font-family="Liberation Sans, sans-serif" font-size="9" fill="#aaa">↵</text><text x="333.4" y="608.6" font-family="Liberation Serif, serif" font-size="15.5" fill="#111" textLength="432" lengthAdjust="spacingAndGlyphs">p=.000, CMIN/DF=1.74, GFI=.87, AGFI=.82, CFI=.93, RMSEA= 0.06.</text><text x="329.4" y="626.7" font-family="Liberation Serif, serif" font-size="15.5" fill="#111" textLength="400" lengthAdjust="spacingAndGlyphs">Criterion: CMIN/DF≤5, GFI≥.9, AGFI≥.9, CFI≥.9, RMSEA≤0.08.</text><path d="M578 558.4 L579.5 557.6 L581.0 559.0 L582.5 557.6 L584.0 559.0 L585.5 557.6 L587.0 559.0 L588.5 557.6 L590.0 559.0 L591.5 557.6 L593.0 559.0 L594.5 557.6 L596.0 559.0 L597.5 557.6 L599.0 559.0 L600.5 557.6 L602.0 559.0 L603.5 557.6 L605.0 559.0 L606.5 557.6 L608.0 559.0 L609.5 557.6 L611.0 559.0 L612.5 557.6 L614.0 559.0 L615.5 557.6 L617.0 559.0 L618.5 557.6 L620.0 559.0 L621.5 557.6 L623.0 559.0 L624.5 557.6 L626.0 559.0 L627.5 557.6 L629.0 559.0 L630.5 557.6 L632.0 559.0 L633.5 557.6 L635.0 559.0 L636.5 557.6 L638.0 559.0 L639.5 557.6 L641.0 559.0 L642.5 557.6 L644.0 559.0 L645.5 557.6 L647.0 559.0 L648.5 557.6" fill="none" stroke="#e03a3a" stroke-width="0.7"/><path d="M491 580.6 L492.5 579.8 L494.0 581.2 L495.5 579.8 L497.0 581.2 L498.5 579.8 L500.0 581.2 L501.5 579.8 L503.0 581.2 L504.5 579.8 L506.0 581.2 L507.5 579.8 L509.0 581.2 L510.5 579.8 L512.0 581.2 L513.5 579.8 L515.0 581.2 L516.5 579.8 L518.0 581.2 L519.5 579.8 L521.0 581.2 L522.5 579.8 L524.0 581.2 L525.5 579.8 L527.0 581.2 L528.5 579.8 L530.0 581.2 L531.5 579.8 L533.0 581.2 L534.5 579.8 L536.0 581.2 L537.5 579.8 L539.0 581.2 L540.5 579.8 L542.0 581.2 L543.5 579.8 L545.0 581.2 L546.5 579.8 L548.0 581.2 L549.5 579.8 L551.0 581.2 L552.5 579.8 L554.0 581.2 L555.5 579.8 L557.0 581.2 L558.5 579.8 L560.0 581.2 L561.5 579.8 L563.0 581.2 L564.5 579.8 L566.0 581.2 L567.5 579.8 L569.0 581.2" fill="none" stroke="#e03a3a" stroke-width="0.7"/><line x1="161.5" y1="143" x2="161.5" y2="649" stroke="#9a9a9a" stroke-opacity="0.6" stroke-width="1" stroke-dasharray="1 4"/><line x1="214.5" y1="143" x2="214.5" y2="649" stroke="#9a9a9a" stroke-opacity="0.6" stroke-width="1" stroke-dasharray="1 4"/><line x1="267.6" y1="143" x2="267.6" y2="649" stroke="#9a9a9a" stroke-opacity="0.6" stroke-width="1" stroke-dasharray="1 4"/><line x1="320.6" y1="143" x2="320.6" y2="649" stroke="#9a9a9a" stroke-opacity="0.6" stroke-width="1" stroke-dasharray="1 4"/><line x1="373.6" y1="143" x2="373.6" y2="649" stroke="#9a9a9a" stroke-opacity="0.6" stroke-width="1" stroke-dasharray="1 4"/><line x1="426.6" y1="143" x2="426.6" y2="649" stroke="#9a9a9a" stroke-opacity="0.6" stroke-width="1" stroke-dasharray="1 4"/><line x1="479.7" y1="143" x2="479.7" y2="649" stroke="#9a9a9a" stroke-opacity="0.6" stroke-width="1" stroke-dasharray="1 4"/><line x1="532.7" y1="143" x2="532.7" y2="649" stroke="#9a9a9a" stroke-opacity="0.6" stroke-width="1" stroke-dasharray="1 4"/><line x1="585.7" y1="143" x2="585.7" y2="649" stroke="#9a9a9a" stroke-opacity="0.6" stroke-width="1" stroke-dasharray="1 4"/><line x1="638.8" y1="143" x2="638.8" y2="649" stroke="#9a9a9a" stroke-opacity="0.6" stroke-width="1" stroke-dasharray="1 4"/><line x1="691.8" y1="143" x2="691.8" y2="649" stroke="#9a9a9a" stroke-opacity="0.6" stroke-width="1" stroke-dasharray="1 4"/><line x1="744.8" y1="143" x2="744.8" y2="649" stroke="#9a9a9a" stroke-opacity="0.6" stroke-width="1" stroke-dasharray="1 4"/><line x1="797.9" y1="143" x2="797.9" y2="649" stroke="#9a9a9a" stroke-opacity="0.6" stroke-width="1" stroke-dasharray="1 4"/><line x1="850.9" y1="143" x2="850.9" y2="649" stroke="#9a9a9a" stroke-opacity="0.6" stroke-width="1" stroke-dasharray="1 4"/><line x1="903.9" y1="143" x2="903.9" y2="649" stroke="#9a9a9a" stroke-opacity="0.6" stroke-width="1" stroke-dasharray="1 4"/><line x1="957.0" y1="143" x2="957.0" y2="649" stroke="#9a9a9a" stroke-opacity="0.6" stroke-width="1" stroke-dasharray="1 4"/><line x1="136" y1="184.6" x2="976" y2="184.6" stroke="#555" stroke-width="1" stroke-dasharray="1 4.1"/><line x1="136" y1="237.5" x2="976" y2="237.5" stroke="#555" stroke-width="1" stroke-dasharray="1 4.1"/><line x1="136" y1="290.4" x2="976" y2="290.4" stroke="#555" stroke-width="1" stroke-dasharray="1 4.1"/><line x1="136" y1="343.3" x2="976" y2="343.3" stroke="#555" stroke-width="1" stroke-dasharray="1 4.1"/><line x1="136" y1="396.2" x2="976" y2="396.2" stroke="#555" stroke-width="1" stroke-dasharray="1 4.1"/><line x1="136" y1="449.1" x2="976" y2="449.1" stroke="#555" stroke-width="1" stroke-dasharray="1 4.1"/><line x1="136" y1="502.0" x2="976" y2="502.0" stroke="#555" stroke-width="1" stroke-dasharray="1 4.1"/><line x1="136" y1="554.9" x2="976" y2="554.9" stroke="#555" stroke-width="1" stroke-dasharray="1 4.1"/><line x1="136" y1="607.8" x2="976" y2="607.8" stroke="#555" stroke-width="1" stroke-dasharray="1 4.1"/></svg>

<!-- status bar -->
<div id="status" class="abs">
  <div class="t" style="left:-1px;top:4.5px;font-size:7.8px;color:#333">(中国)</div>
  <svg class="abs" style="left:30px;top:3.5px" width="11" height="10" viewBox="0 0 11 10"><circle cx="4" cy="3" r="1.5" fill="none" stroke="#444" stroke-width="0.9"/><path d="M1 9 L4 5 L7 9 M4 5 L9 2" fill="none" stroke="#444" stroke-width="0.9"/></svg>
  <div class="t" style="left:42px;top:4.5px;font-size:7.8px;color:#333">辅助功能: 调查</div>
  <svg class="abs" style="left:737px;top:4px" width="8" height="8" viewBox="0 0 8 8"><path d="M0 2 H8 M2 4.5 H8 M0 7 H8" stroke="#555" stroke-width="0.9"/></svg>
  <div class="t" style="left:747px;top:4.5px;font-size:7.8px;color:#333">备注</div>
  <svg class="abs" style="left:778px;top:3.5px" width="10" height="9" viewBox="0 0 10 9"><path d="M0.5 0.5 H9.5 V6 H4 L2 8.5 V6 H0.5 Z" fill="#444"/></svg>
  <div class="t" style="left:789px;top:4.5px;font-size:7.8px;color:#333">批注</div>
  <div class="abs" style="left:817px;top:0px;width:26px;height:16px;background:#d4d4d4"></div>
  <div class="abs" style="left:824px;top:4px;width:11px;height:8px;border:1px solid #666"></div>
  <div class="abs" style="left:827px;top:6px;width:5px;height:4px;border:1px solid #888"></div>
  <div class="abs" style="left:852px;top:3.5px;width:4px;height:3.5px;border:1px solid #666"></div>
  <div class="abs" style="left:858px;top:3.5px;width:4px;height:3.5px;border:1px solid #666"></div>
  <div class="abs" style="left:852px;top:9px;width:4px;height:3.5px;border:1px solid #666"></div>
  <div class="abs" style="left:858px;top:9px;width:4px;height:3.5px;border:1px solid #666"></div>
  <div class="abs" style="left:877px;top:3.5px;width:11px;height:9px;border:1px solid #666"></div>
  <div class="abs" style="left:882px;top:3.5px;width:1px;height:9px;background:#666"></div>
  <svg class="abs" style="left:904px;top:3px" width="12" height="11" viewBox="0 0 12 11"><path d="M1 1 H11 M2 1 V5 H10 V1 M6 5 V9 M3.5 10 H8.5" fill="none" stroke="#555" stroke-width="0.9"/></svg>
  <div class="abs" style="left:929px;top:8px;width:4px;height:1px;background:#555"></div>
  <div class="abs" style="left:937px;top:8px;width:30px;height:1px;background:#444"></div>
</div>

<!-- zoom toolbar -->
<div id="zbar" class="abs">
  <!-- mic -->
  <svg class="abs" style="left:19px;top:4px" width="14" height="15" viewBox="0 0 14 15"><rect x="4" y="0" width="6" height="9" rx="3" fill="#d6d6d6"/><path d="M2 6 Q2 12 7 12 Q12 12 12 6" fill="none" stroke="#d6d6d6" stroke-width="1.2"/><line x1="7" y1="12" x2="7" y2="15" stroke="#d6d6d6" stroke-width="1.2"/></svg>
  <svg class="abs" style="left:41px;top:7px" width="7" height="5" viewBox="0 0 7 5"><path d="M1 1 L3.5 3.5 L6 1" fill="none" stroke="#bbb" stroke-width="1.1"/></svg>
  <div class="zl" style="left:26px">静音</div>
  <!-- video -->
  <svg class="abs" style="left:74px;top:5px" width="20" height="13" viewBox="0 0 20 13"><rect x="1" y="2" width="12" height="9" rx="1.5" fill="#d6d6d6"/><path d="M13 6 L19 2 L19 11 L13 7 Z" fill="#d6d6d6"/><line x1="1" y1="13" x2="17" y2="0" stroke="#e0423d" stroke-width="1.3"/></svg>
  <svg class="abs" style="left:101px;top:7px" width="7" height="5" viewBox="0 0 7 5"><path d="M1 1 L3.5 3.5 L6 1" fill="none" stroke="#bbb" stroke-width="1.1"/></svg>
  <div class="zl" style="left:83px">开启视频</div>
  <!-- participants -->
  <svg class="abs" style="left:144px;top:5px" width="18" height="13" viewBox="0 0 18 13"><circle cx="6" cy="3.5" r="3" fill="#d6d6d6"/><path d="M0 13 Q0 7 6 7 Q12 7 12 13 Z" fill="#d6d6d6"/><circle cx="12.5" cy="4" r="2.6" fill="#d6d6d6"/><path d="M10 8 Q18 6 18 13 L13 13 Z" fill="#d6d6d6"/></svg>
  <div class="t" style="left:165px;top:4px;font-size:9px;color:#ccc">20</div>
  <svg class="abs" style="left:182px;top:7px" width="7" height="5" viewBox="0 0 7 5"><path d="M1 1 L3.5 3.5 L6 1" fill="none" stroke="#bbb" stroke-width="1.1"/></svg>
  <div class="zl" style="left:153px">参会者</div>
  <!-- chat -->
  <svg class="abs" style="left:216px;top:5px" width="18" height="15" viewBox="0 0 18 15"><path d="M1 2 Q1 0 3 0 L13 0 Q15 0 15 2 L15 9 Q15 11 13 11 L6 11 L3 14 L3 11 Q1 11 1 9 Z" fill="#d6d6d6"/></svg>
  <div class="abs" style="left:226px;top:1px;width:10px;height:10px;border-radius:50%;background:#e5393b"></div>
  <div class="t" style="left:228.5px;top:2.5px;font-size:7.5px;color:#fff">3</div>
  <svg class="abs" style="left:244px;top:7px" width="7" height="5" viewBox="0 0 7 5"><path d="M1 1 L3.5 3.5 L6 1" fill="none" stroke="#bbb" stroke-width="1.1"/></svg>
  <div class="zl" style="left:224px">聊天</div>
  <!-- new share -->
  <div class="abs" style="left:277px;top:6px;width:17px;height:12px;background:#23c552;border-radius:2px"></div>
  <svg class="abs" style="left:281px;top:8px" width="9" height="8" viewBox="0 0 9 8"><path d="M4.5 0 L8 4 L5.5 4 L5.5 8 L3.5 8 L3.5 4 L1 4 Z" fill="#111"/></svg>
  <div class="zl" style="left:285px;color:#2ed15a">新的共享</div>
  <!-- pause -->
  <div class="abs" style="left:338px;top:7px;width:2px;height:11px;background:#d6d6d6"></div>
  <div class="abs" style="left:345px;top:7px;width:2px;height:11px;background:#d6d6d6"></div>
  <div class="zl" style="left:342px">暂停共享</div>
  <!-- annotate -->
  <svg class="abs" style="left:390px;top:5px" width="13" height="13" viewBox="0 0 13 13"><path d="M1 12 L2 9 L9 2 L11 4 L4 11 Z" fill="#d6d6d6"/></svg>
  <div class="zl" style="left:396px">注释</div>
  <!-- remote -->
  <svg class="abs" style="left:454px;top:4px" width="10" height="14" viewBox="0 0 10 14"><rect x="0.5" y="0.5" width="9" height="13" rx="4.5" fill="#d6d6d6"/><line x1="5" y1="1" x2="5" y2="5" stroke="#1e1f22" stroke-width="1"/></svg>
  <div class="zl" style="left:459px">远程控制</div>
  <!-- apps -->
  <svg class="abs" style="left:515px;top:5px" width="13" height="13" viewBox="0 0 13 13"><path d="M1 4 L1 1 L4 1 M9 1 L12 1 L12 4 M12 9 L12 12 L9 12 M4 12 L1 12 L1 9" fill="none" stroke="#d6d6d6" stroke-width="1.2"/><circle cx="9" cy="4" r="1.2" fill="#d6d6d6"/></svg>
  <div class="zl" style="left:521px">应用</div>
  <!-- more -->
  <div class="abs" style="left:560px;top:10.5px;width:2.5px;height:2.5px;border-radius:50%;background:#d6d6d6"></div><div class="abs" style="left:567.5px;top:10.5px;width:2.5px;height:2.5px;border-radius:50%;background:#d6d6d6"></div><div class="abs" style="left:575px;top:10.5px;width:2.5px;height:2.5px;border-radius:50%;background:#d6d6d6"></div>
  <div class="zl" style="left:569px">更多</div>
</div>
<div class="abs" style="left:405px;top:0;width:31px;height:1px;background:#55708f"></div><div class="abs" style="left:436px;top:0;width:114px;height:1px;background:#f0f0f0"></div>
<div class="abs" style="left:535px;top:34px;width:127px;height:14px;background:#2fcb55;border-radius:0 0 0 3px"></div>
<div class="t" style="left:564px;top:37px;font-size:9px;color:#0b2d14">你正在共享屏幕</div>
<div class="t" style="left:541px;top:37px;font-size:8px;color:#0b2d14">❮</div>
<div class="abs" style="left:648px;top:37px;width:6px;height:8px;background:#0b3a18;border-radius:1px 1px 3px 3px"></div>
<div class="abs" style="left:662px;top:34px;width:53px;height:14px;background:#e02b2b;border-radius:0 0 3px 0"></div>
<div class="abs" style="left:666px;top:38px;width:6px;height:6px;background:#fff"></div>
<div class="t" style="left:675px;top:37px;font-size:9px;color:#fff">停止共享</div>

<!-- participants panel -->
<div id="panel" class="abs">
  <!-- Billy WONG video -->
  <svg class="abs" style="left:1px;top:1px" width="125" height="81" viewBox="842 73 125 81">
    <defs>
      <linearGradient id="bbg" x1="0" y1="0" x2="0" y2="1"><stop offset="0" stop-color="#e4efe9"/><stop offset="0.6" stop-color="#f1f5f3"/><stop offset="1" stop-color="#f7f8f8"/></linearGradient>
      <radialGradient id="face1" cx="0.5" cy="0.4" r="0.6"><stop offset="0" stop-color="#e9c1a4"/><stop offset="1" stop-color="#c99578"/></radialGradient>
    </defs>
    <rect x="842" y="73" width="125" height="81" fill="url(#bbg)"/>
    <path d="M842 73 L910 73 C895 78 880 82 866 88 C856 92 848 97 842 100 Z" fill="#5fb08c"/>
    <path d="M842 73 L880 73 C870 77 858 82 850 88 L842 92 Z" fill="#3f9b7a" opacity="0.7"/>
    <path d="M853 96 C851 88 856 80 862 79 C868 79 869 86 866 92 C864 98 858 99 853 96 Z" fill="#fff"/>
    <circle cx="857" cy="82" r="3" fill="#e2c640"/><circle cx="860" cy="87" r="3.5" fill="#2a6d43"/>
    <text x="869" y="92.5" font-family="Liberation Sans" font-size="5.2" font-weight="bold" fill="#e88c3a">ICOIE <tspan fill="#5aa8c8" font-weight="normal">2022</tspan></text>
    <text x="849" y="107.5" font-family="Liberation Sans" font-size="3.2" font-weight="bold" fill="#9cbe3c">EdU <tspan fill="#555">HK</tspan></text>
    <rect x="875" y="104" width="12" height="2" fill="#999"/>
    <circle cx="851" cy="116" r="2" fill="#2c6a5a"/>
    <rect x="854" y="115" width="12" height="1.6" fill="#555"/>
    <rect x="873" y="115" width="10" height="1.6" fill="#aaa"/>
    <text x="938" y="80.5" font-family="Liberation Sans" font-size="2.5" fill="#7a8a86">2022 International Conf</text>
    <text x="938" y="87.5" font-family="Liberation Sans" font-size="4.2" font-weight="bold" fill="#2c5a58">Open and</text>
    <text x="938" y="93.5" font-family="Liberation Sans" font-size="4.2" font-weight="bold" fill="#2c5a58">Innovative Ed</text>
    <text x="938" y="99" font-family="Liberation Sans" font-size="2.3" fill="#7a8a86">22-24 July 2022</text>
    <rect x="938" y="102" width="30" height="3" fill="#4fb3a5"/>
    <path d="M940 154 C945 150 955 149 967 149 L967 154 Z" fill="#3f9b6a"/>
    <!-- man -->
    <path d="M893 154 C895 145 903 140 912 138 L932 138 C941 140 946 146 948 154 Z" fill="#27324a"/>
    <path d="M914 138 L921 154 L930 138 Z" fill="#b9cde0"/>
    <path d="M909 112 C909 103 914 99 922 99 C930 99 936 103 936 112 L935 132 C933 138 928 141 922 141 C915 141 911 137 910 131 Z" fill="url(#face1)"/>
    <path d="M907 116 C905 104 910 96 921 95 C932 95 938 101 938 112 L937 117 C935 110 932 106 928 105 C921 104 914 105 910 108 Z" fill="#1b1b20"/>
    <path d="M910 117 L936 117" stroke="#333" stroke-width="0.8"/>
    <path d="M910.5 120 C916 118 930 118 938 120 L937.5 134 C933 140 927 142 921 141 C915 140 912 137 911 132 Z" fill="#a3d0e8"/>
    <rect x="927.5" y="140" width="3.5" height="14" fill="#111"/>
    <ellipse cx="929.2" cy="139" rx="3.3" ry="3" fill="#1a1a1a"/>
    <rect x="842.5" y="73.5" width="125" height="80" fill="none" stroke="#9ed67a" stroke-width="1"/>
    <!-- label -->
    <rect x="842" y="144.3" width="60" height="9" fill="#3a3a3a" opacity="0.85"/>
    <path d="M845.5 145.5 L851 145.5 L849 148 L851.5 152.5 L845 152.5 L847.5 148 Z" fill="#d8d8d8"/>
    <text x="856.5" y="152" font-family="Liberation Sans" font-size="8.6" fill="#eee">Billy WONG</text>
  </svg>
  <!-- Yuning video -->
  <svg class="abs" style="left:2px;top:81.4px" width="124" height="77.2" viewBox="843 153.4 124 77.2">
    <defs>
      <radialGradient id="face2" cx="0.5" cy="0.45" r="0.6"><stop offset="0" stop-color="#f0d4c2"/><stop offset="1" stop-color="#dcae96"/></radialGradient>
    </defs>
    <rect x="843" y="153.4" width="124" height="77.2" fill="#f7f7f7"/>
    <path d="M873 222 C876 214 879 206 880 196 C880 186 879 176 882 168 C886 160 893 157 903 157 C914 157 923 162 926 172 C928 182 926 192 928 202 C929 210 932 216 934 222 C926 226 917 225 911 221 L897 221 C889 225 880 226 873 222 Z" fill="#1e1f26"/>
    <path d="M886 180 C886 170 892 166 903 166 C913 166 919 172 919 181 L918 198 C916 208 910 213 902.5 213 C895 213 889 208 887 198 Z" fill="url(#face2)"/>
    <path d="M884 186 C883 172 889 162 903 162 C915 162 921 170 921 184 C918 174 912 169 906 168 C897 168 889 174 884 186 Z" fill="#1e1f26"/>
    <path d="M896 205 L909 205 L910 216 L903 223 L895 216 Z" fill="#e2b9a2"/>
    <path d="M856 231 C858 222 868 217 882 214 L895 212 L903 223 L911 212 L924 214 C938 217 945 223 947 231 Z" fill="#dfe6ee"/>
    <ellipse cx="895" cy="187" rx="2.2" ry="0.9" fill="#5a403a"/>
    <ellipse cx="910" cy="187" rx="2.2" ry="0.9" fill="#5a403a"/>
    <path d="M899 203.5 Q902.5 205 906 203.5" stroke="#b8706a" stroke-width="0.9" fill="none"/>
  </svg>
  <div class="abs" style="left:2px;top:158.6px;width:57px;height:10.4px;background:#2e2e2e"></div>
  <div class="t" style="left:4.5px;top:159.6px;font-size:8.6px;color:#e8e8e8">Yuning Zheng</div>
  <!-- tiles -->
  <div class="abs" style="left:0;top:251px;width:126px;height:1px;background:#2e2e2e"></div>
  <div class="pname" style="left:74px;top:206px">Conference Venue</div>
  <div class="plab" style="top:240px">Conference Venue</div>
  <div class="abs" style="left:0;top:336px;width:126px;height:1px;background:#2e2e2e"></div>
  <div class="pname" style="left:74px;top:290px">Fei Ping Por</div>
  <div class="plab" style="top:325px"><span class="mic"></span>Fei Ping Por</div>
  <div class="abs" style="left:0;top:420px;width:126px;height:1px;background:#2e2e2e"></div>
  <div class="pname" style="left:74px;top:373.5px">TANG Pui Yin</div>
  <div class="plab" style="top:408px"><span class="mic"></span>TANG Pui Yin</div>
  <div class="pname" style="left:74px;top:457.5px">Joe Lam</div>
  <div class="plab" style="top:492px"><span class="mic"></span>Joe Lam</div>
</div>

</body></html>
